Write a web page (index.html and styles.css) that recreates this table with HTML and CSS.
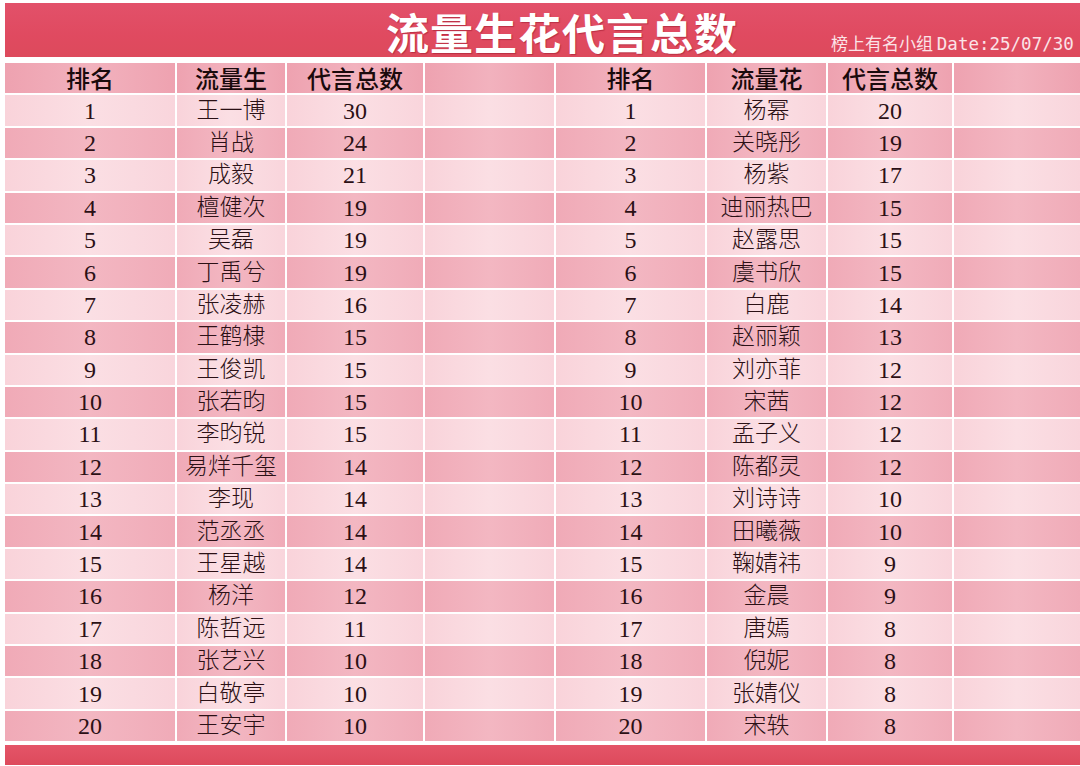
FILE: index.html
```html
<!DOCTYPE html>
<html lang="zh">
<head>
<meta charset="utf-8">
<link rel="stylesheet" href="styles.css">
</head>
<body>
<div class="page">
  <header class="titlebar">
    <h1 class="title">流量生花代言总数</h1>
    <div class="meta">榜上有名小组 <span class="date">Date:25/07/30</span></div>
  </header>
  <div class="table" id="table"></div>
  <div class="footer"></div>
</div>
<script src="app.js"></script>
</body>
</html>
```

FILE: app.js
```js
const men = [["王一博",30],["肖战",24],["成毅",21],["檀健次",19],["吴磊",19],["丁禹兮",19],["张凌赫",16],["王鹤棣",15],["王俊凯",15],["张若昀",15],["李昀锐",15],["易烊千玺",14],["李现",14],["范丞丞",14],["王星越",14],["杨洋",12],["陈哲远",11],["张艺兴",10],["白敬亭",10],["王安宇",10]];
const women = [["杨幂",20],["关晓彤",19],["杨紫",17],["迪丽热巴",15],["赵露思",15],["虞书欣",15],["白鹿",14],["赵丽颖",13],["刘亦菲",12],["宋茜",12],["孟子义",12],["陈都灵",12],["刘诗诗",10],["田曦薇",10],["鞠婧祎",9],["金晨",9],["唐嫣",8],["倪妮",8],["张婧仪",8],["宋轶",8]];
const t = document.getElementById('table');
function cell(text, cls) {
  const d = document.createElement('div');
  d.className = 'cell ' + cls;
  d.textContent = text;
  t.appendChild(d);
}
["排名","流量生","代言总数","","排名","流量花","代言总数",""].forEach(h => cell(h, 'head'));
for (let i = 0; i < 20; i++) {
  const cls = i % 2 === 0 ? 'odd' : 'even';
  cell(i + 1, cls + ' num');
  cell(men[i][0], cls + ' name');
  cell(men[i][1], cls + ' num');
  cell('', cls);
  cell(i + 1, cls + ' num');
  cell(women[i][0], cls + ' name');
  cell(women[i][1], cls + ' num');
  cell('', cls);
}
```

FILE: styles.css
```css
html, body {
  margin: 0;
  padding: 0;
  background: #ffffff;
}
.page {
  width: 1080px;
  height: 766px;
  padding: 3px 0 0 5px;
  box-sizing: border-box;
  overflow: hidden;
}
.titlebar {
  height: 54px;
  background: linear-gradient(180deg, #e2516a 0%, #e04a60 60%, #dd4a5c 100%);
  display: flex;
  align-items: center;
  position: relative;
}
.title {
  margin: 2px 0 0 381px;
  font-family: "Noto Sans CJK SC", sans-serif;
  font-weight: 700;
  font-size: 43px;
  line-height: 52px;
  height: 52px;
  color: #ffffff;
  letter-spacing: 1px;
  text-shadow: 1px 1px 1px rgba(150, 20, 40, 0.5);
}
.meta {
  position: absolute;
  left: 826px;
  bottom: 2px;
  font-family: "Noto Sans CJK SC", sans-serif;
  font-size: 17px;
  line-height: 22px;
  color: #fbe3e7;
  white-space: nowrap;
}
.date {
  font-family: "DejaVu Sans Mono", "Liberation Mono", monospace;
  font-size: 17.5px;
}
.table {
  margin-top: 6px;
  display: grid;
  grid-template-columns: 170px 108px 136px 129px 149px 119px 124px 126px;
  grid-auto-rows: 30.4px;
  gap: 2px;
  background: #ffffff;
}
.cell {
  display: flex;
  align-items: center;
  justify-content: center;
  font-family: "Liberation Serif", "Noto Sans CJK SC", serif;
  font-size: 24px;
  line-height: 30px;
  color: #2b1015;
  white-space: nowrap;
}
.cell.name {
  font-weight: 300;
  font-size: 23px;
}
.head {
  background: linear-gradient(90deg, #eea2b0 0%, #f2b2be 50%, #eea2b0 100%);
  font-family: "Noto Sans CJK SC", sans-serif;
  font-weight: 500;
  font-size: 24px;
  color: #1a0a0c;
}
.odd {
  background: linear-gradient(90deg, #f9d3da 0%, #fbdfe4 50%, #f9d5dc 100%);
}
.even {
  background: linear-gradient(90deg, #f0aab7 0%, #f3b7c2 50%, #f0abb8 100%);
}
.footer {
  margin-top: 4px;
  height: 20px;
  background: linear-gradient(180deg, #e45468 0%, #dd4a5c 100%);
}
```
